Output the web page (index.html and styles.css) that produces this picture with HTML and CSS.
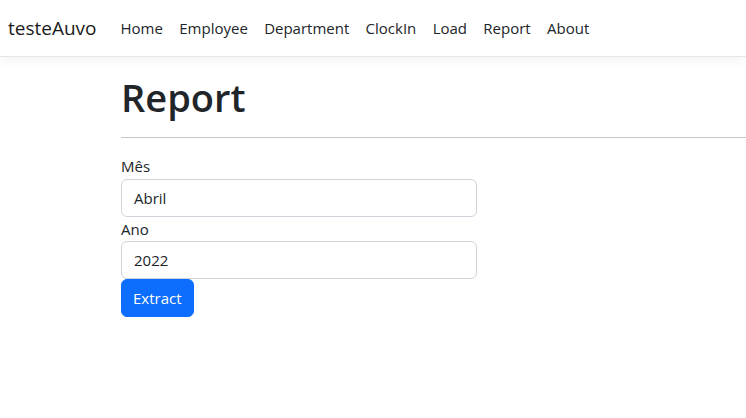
FILE: index.html
```html
<!DOCTYPE html>
<html lang="pt">
<head>
<meta charset="utf-8">
<title>Report - testeAuvo</title>
<link rel="stylesheet" href="styles.css">
</head>
<body>
<header class="navbar">
  <a class="brand" href="#">testeAuvo</a>
  <nav class="nav">
    <a class="nav-link" href="#">Home</a>
    <a class="nav-link" href="#">Employee</a>
    <a class="nav-link" href="#">Department</a>
    <a class="nav-link" href="#">ClockIn</a>
    <a class="nav-link" href="#">Load</a>
    <a class="nav-link" href="#">Report</a>
    <a class="nav-link" href="#">About</a>
  </nav>
</header>
<main class="main">
  <h1 class="title">Report</h1>
  <hr class="divider">
  <form class="form">
    <label class="label" for="mes">Mês</label>
    <input class="input" id="mes" type="text" value="Abril">
    <label class="label" for="ano">Ano</label>
    <input class="input" id="ano" type="text" value="2022">
    <button class="btn" type="button">Extract</button>
  </form>
</main>
</body>
</html>
```
FILE: styles.css
```css
* { box-sizing: border-box; }
html, body { margin: 0; padding: 0; }
body {
  font-family: "Open Sans", "Noto Sans", sans-serif;
  font-size: 15px;
  line-height: 24px;
  color: #212529;
  background: #fff;
}
.navbar {
  display: flex;
  align-items: center;
  height: 57px;
  padding: 0 10px 0 8px;
  border-bottom: 1px solid #e6e6e6;
  box-shadow: 0 4px 12px rgba(0, 0, 0, 0.05);
  background: #fff;
}
.brand {
  font-size: 19px;
  line-height: 30px;
  color: #1a1a1a;
  text-decoration: none;
  margin-right: 16px;
}
.nav { display: flex; }
.nav-link {
  padding: 8px 8.17px;
  color: #212529;
  text-decoration: none;
  line-height: 24px;
}
.nav-link:first-child { padding-left: 8px; }
.main {
  padding-left: 121px;
  margin-top: 16px;
}
.title {
  margin: 0 0 8px;
  font-size: 38px;
  line-height: 48px;
  font-weight: 600;
  color: #212529;
}
.divider {
  margin: 16px 0;
  border: 0;
  border-top: 1px solid #c6c6c6;
  height: 0;
}
.form {
  display: flex;
  flex-direction: column;
  align-items: flex-start;
}
.label {
  display: block;
  line-height: 24px;
  height: 25px;
}
.input {
  display: block;
  width: 356px;
  height: 38px;
  padding: 6px 12px;
  font: inherit;
  font-size: 15px;
  color: #212529;
  border: 1px solid #ced4da;
  border-radius: 6px;
  background: #fff;
}
.input + .label { height: 24px; }
.btn {
  height: 38px;
  padding: 6px 11px;
  font: inherit;
  font-size: 15px;
  color: #fff;
  background: #0d6efd;
  border: 1px solid #0d6efd;
  border-radius: 6px;
}
```
